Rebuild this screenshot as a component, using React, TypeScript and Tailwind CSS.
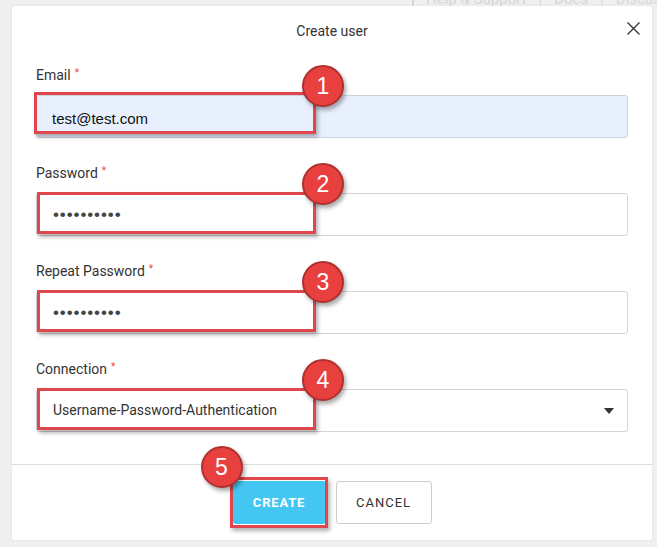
const fields = [
  { label: "Email", value: "test@test.com", kind: "email", n: 1 },
  { label: "Password", value: "••••••••••", kind: "password", n: 2 },
  { label: "Repeat Password", value: "••••••••••", kind: "password", n: 3 },
  { label: "Connection", value: "Username-Password-Authentication", kind: "select", n: 4 },
];

function Badge({ n, className }: { n: number; className: string }) {
  return (
    <div
      className={`absolute z-20 w-[42px] h-[42px] rounded-full bg-[#e8403f] border-2 border-[#b0302f] shadow-[2px_3px_4px_rgba(0,0,0,0.35)] flex items-center justify-center text-white text-[23px] leading-none font-['Liberation_Sans',Arial,sans-serif] ${className}`}
    >
      {n}
    </div>
  );
}

function Field({ label, value, kind, n }: { label: string; value: string; kind: string; n: number }) {
  const isEmail = kind === "email";
  return (
    <div>
      <div className="h-5 mb-[10px] flex items-center text-[14px] text-[#333]">
        {label}
        <span className="ml-[4px] text-[10px] text-[#e84545] relative -top-[3px]">*</span>
      </div>
      <div className="relative">
        <div
          className={`h-[43px] rounded-[3px] border flex items-center ${
            isEmail
              ? "bg-[#e8f0fe] border-[#cdd3dc] pl-[15px] pt-[5px] text-[15px] text-[#111] font-['Liberation_Sans',Arial,sans-serif]"
              : "bg-white border-[#d4d4d4] pl-[16px]"
          }`}
        >
          {kind === "password" && (
            <span className="text-[17px] tracking-[0.9px] text-[#444] font-['Liberation_Sans',Arial,sans-serif]">{value}</span>
          )}
          {kind === "email" && <span>{value}</span>}
          {kind === "select" && (
            <>
              <span className="text-[14px] text-[#333]">{value}</span>
              <svg className="ml-auto mr-[13px]" width="10" height="6" viewBox="0 0 10 6">
                <path d="M0 0h10L5 6z" fill="#333" />
              </svg>
            </>
          )}
        </div>
        {/* annotation box */}
        <div
          className={`absolute z-10 border-[3px] border-[#e0474c] shadow-[2px_3px_4px_rgba(0,0,0,0.3)] ${
            isEmail ? "-left-[2px] -top-[3px] w-[282px] h-[42px]" : "left-[1px] -top-[1px] w-[279px] h-[42px]"
          }`}
        />
        <Badge n={n} className="left-[266px] -top-[30px]" />
      </div>
    </div>
  );
}

export default function App() {
  return (
    <div className="w-[657px] h-[547px] bg-[#efefef] overflow-hidden font-['Roboto',Arial,sans-serif]">
      {/* page behind the modal */}
      <div className="h-[6px] overflow-hidden">
        <div className="flex items-center gap-3 pl-[412px] -mt-[12px] text-[15px] text-[#d6d6d6] whitespace-nowrap">
          <span className="w-[9px] h-[14px] border border-[#d6d6d6]" />
          <span>Help &amp; Support</span>
          <span>|</span>
          <span>Docs</span>
          <span>|</span>
          <span>Discuss</span>
        </div>
      </div>

      <div className="ml-[12px] w-[640px] h-[534px] bg-white rounded-[3px] flex flex-col shadow-[0_0_2px_rgba(0,0,0,0.08)]">
        <div className="relative h-[50px] flex items-center justify-center text-[14px] text-[#333]">
          Create user
          <svg className="absolute right-[12px] top-[16px]" width="13" height="13" viewBox="0 0 13 13">
            <path d="M0.5 0.5l12 12M12.5 0.5l-12 12" stroke="#333" strokeWidth="1.3" fill="none" />
          </svg>
        </div>

        <div className="px-6 pt-[9px] pb-[32px] flex flex-col gap-[25px]">
          {fields.map((f) => (
            <Field key={f.label} {...f} />
          ))}
        </div>

        <div className="border-t border-[#dddddd] flex-1 flex items-start justify-center gap-[10px] pt-4">
          <div className="relative">
            <button className="w-[93px] h-[43px] bg-[#44c6f2] text-white text-[13px] font-bold tracking-[0.8px] rounded-[3px]">
              CREATE
            </button>
            <div className="absolute -left-[3px] -top-[4px] -right-[2px] -bottom-[4px] border-[3px] border-[#e0474c] shadow-[2px_3px_4px_rgba(0,0,0,0.3)]" />
            <Badge n={5} className="-left-[32px] -top-[35px]" />
          </div>
          <button className="w-[96px] h-[43px] bg-white border border-[#cccccc] rounded-[3px] text-[#333] text-[13px] tracking-[1px]">
            CANCEL
          </button>
        </div>
      </div>
    </div>
  );
}
